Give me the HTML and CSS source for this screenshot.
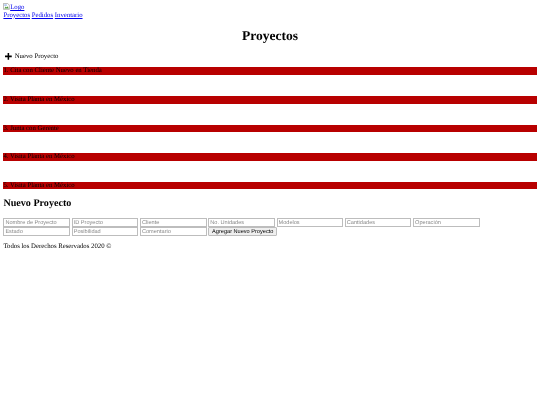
FILE: index.html
```html
<!DOCTYPE html>
<html lang="es">
<head>
<meta charset="utf-8">
<title>Proyectos</title>
<link rel="stylesheet" href="styles.css">
</head>
<body>
<header>
  <a href="#" class="logo"><svg class="broken" viewBox="0 0 16 16" aria-hidden="true"><path d="M1 1h10l4 4v10H1z" fill="#fff" stroke="#909090" stroke-width="1.5"/><path d="M3 13l3.500-5 2.500 2.500 2-3 2.500 5.500z" fill="#4f9a3f"/><path d="M3 3h6v4H3z" fill="#a9c4ee"/></svg>Logo</a>
  <nav><a href="#">Proyectos</a> <a href="#">Pedidos</a> <a href="#">Inventario</a></nav>
</header>
<main>
  <h1>Proyectos</h1>
  <div class="add"><svg class="plus" viewBox="0 0 16 16" aria-hidden="true"><path d="M6.200 0h3.600v6.200H16v3.600H9.800V16H6.200V9.800H0V6.200h6.200z"/></svg><span>Nuevo Proyecto</span></div>
  <ol class="list">
    <li class="bar">1. Cita con Cliente Nuevo en Tienda</li>
    <li class="bar">2. Visita Planta en México</li>
    <li class="bar">3. Junta con Gerente</li>
    <li class="bar">4. Visita Planta en México</li>
    <li class="bar">5. Visita Planta en México</li>
  </ol>
  <h2>Nuevo Proyecto</h2>
  <form>
    <input placeholder="Nombre de Proyecto">
    <input placeholder="ID Proyecto">
    <input placeholder="Cliente">
    <input placeholder="No. Unidades">
    <input placeholder="Modelos">
    <input placeholder="Cantidades">
    <input placeholder="Operación">
    <input placeholder="Estado">
    <input placeholder="Posibilidad">
    <input placeholder="Comentario">
    <button type="button">Agregar Nuevo Proyecto</button>
  </form>
</main>
<footer><p>Todos los Derechos Reservados 2020 ©</p></footer>
</body>
</html>
```
FILE: styles.css
```css
html { background: #fff; }
body {
  margin: 3.4px;
  font-family: "Liberation Serif", serif;
  font-size: 6.75px;
  line-height: 7.6px;
  color: #000;
  text-rendering: geometricPrecision;
  filter: blur(0.3px);
}
a { color: #0000ee; text-decoration: underline; }
.logo { display: inline-block; }
.broken { width: 6.75px; height: 6.75px; vertical-align: -1px; }
h1 {
  font-size: 13.5px;
  line-height: 15.5px;
  text-align: center;
  margin: 9px 0 9px;
}
.add {
  display: flex;
  align-items: center;
  gap: 3px;
  padding-left: 1.6px;
  margin: 8px 0 7px;
}
.plus { width: 6.75px; height: 6.75px; fill: #000; }
.list { list-style: none; margin: 0; padding: 0; }
.bar {
  background: #b80000;
  color: #000;
  margin-bottom: 21px;
}
.bar:last-child { margin-bottom: 0; }
h2 {
  font-size: 10.1px;
  line-height: 11.5px;
  margin: 9px 0 8.5px;
}
form { font-size: 6.75px; }
input, button {
  box-sizing: border-box;
  font-family: "Liberation Sans", sans-serif;
  font-size: 5.6px;
  height: 9px;
  padding: 0 1px;
  margin: 0;
  vertical-align: top;
  text-rendering: geometricPrecision;
}
input {
  width: 66.6px;
  border: 1px solid #bdbdbd;
  background: #fff;
}
input::placeholder { color: #8a8a8a; }
button {
  width: 69px;
  border: 1px solid #bdbdbd;
  border-radius: 1px;
  background: #efefef;
  color: #000;
}
footer p { margin: 6.75px 0; }
```
